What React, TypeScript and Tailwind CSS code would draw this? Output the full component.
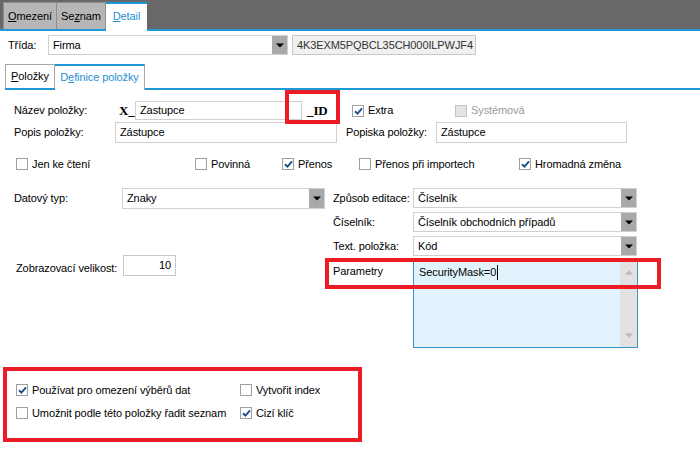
import React from "react";

function Check({ checked, disabled }: { checked?: boolean; disabled?: boolean }) {
  return (
    <span
      className={
        disabled
          ? "flex h-[12px] w-[12px] shrink-0 items-center justify-center border border-[#c4c4c4] bg-[#e4e4e4]"
          : "flex h-[12px] w-[12px] shrink-0 items-center justify-center border border-[#a0a0a0] bg-white"
      }
    >
      {checked && (
        <svg width="9" height="8" viewBox="0 0 9 8">
          <path d="M1 4.2 L3.5 6.6 L8 1.4" fill="none" stroke="#1d4f8e" strokeWidth="1.9" />
        </svg>
      )}
    </span>
  );
}

function CheckItem({
  label,
  checked,
  disabled,
  className,
}: {
  label: string;
  checked?: boolean;
  disabled?: boolean;
  className?: string;
}) {
  return (
    <div className={"flex items-center gap-[4px] " + (className ?? "")}>
      <Check checked={checked} disabled={disabled} />
      <span className={disabled ? "text-[#9a9a9a]" : "text-black"}>{label}</span>
    </div>
  );
}

function Arrow({ color = "#000" }: { color?: string }) {
  return (
    <svg width="8" height="5" viewBox="0 0 8 5">
      <polygon points="0,0.5 8,0.5 4,4.5" fill={color} />
    </svg>
  );
}

function Select({ text, className }: { text: string; className: string }) {
  return (
    <div className={"flex h-full items-stretch border border-[#d0d0d0] bg-white " + className}>
      <div className="flex flex-1 items-center pl-[4px]">{text}</div>
      <div className="flex w-[15px] items-center justify-center bg-[#a9a9a9]">
        <Arrow />
      </div>
    </div>
  );
}

export default function App() {
  return (
    <div className="relative h-[454px] w-[700px] overflow-hidden bg-white font-['Liberation_Sans',Arial,sans-serif] text-[11px] tracking-[-0.1px] text-black">
      {/* top tab bar */}
      <div className="relative flex h-[31px] items-end bg-[#686868] pl-[3px]">
        <div className="absolute bottom-0 left-0 h-[2px] w-full bg-[#1d9ad6]" />
        <div className="relative mb-[2px] flex h-[27px] w-[54px] items-center justify-center border border-b-0 border-[#8c8c8c] bg-[#b6b6b6]">
          <span>
            <span className="underline">O</span>mezení
          </span>
        </div>
        <div className="relative mb-[2px] flex h-[27px] w-[49px] items-center justify-center border border-b-0 border-l-0 border-[#8c8c8c] bg-[#b6b6b6]">
          <span>
            Se<span className="underline">z</span>nam
          </span>
        </div>
        <div className="relative flex h-[29px] w-[41px] items-center justify-center border-t-2 border-[#1d9ad6] bg-white pb-[2px] text-[#2a8fd4]">
          <span>
            <span className="underline">D</span>etail
          </span>
        </div>
      </div>

      {/* Třída row */}
      <div className="mt-[4px] flex h-[20px] items-stretch">
        <div className="flex w-[48px] items-center pl-[8px]">Třída:</div>
        <Select text="Firma" className="w-[240px]" />
        <div className="ml-[4px] flex w-[184px] items-center border border-[#c8c8c8] bg-[#f0f0f0] pl-[4px] text-[#333]">
          4K3EXM5PQBCL35CH000ILPWJF4
        </div>
      </div>

      {/* sub tabs */}
      <div className="relative ml-[5px] mt-[9px] flex h-[26px] items-start">
        <div className="absolute bottom-0 left-0 h-[2px] w-[695px] bg-[#1d9ad6]" />
        <div className="relative flex h-[24px] w-[50px] items-center justify-center border border-b-0 border-[#a8a8a8] bg-white">
          <span>
            <span className="underline">P</span>oložky
          </span>
        </div>
        <div className="relative flex h-[26px] w-[90px] items-center justify-center border-r border-t-2 border-r-[#a8a8a8] border-t-[#1d9ad6] bg-white pb-[2px] text-[#2a8fd4]">
          <span>
            D<span className="underline">e</span>finice položky
          </span>
        </div>
      </div>

      {/* Název položky row */}
      <div className="mt-[11px] flex h-[19px] items-center pl-[14px]">
        <div className="w-[105px]">Název položky:</div>
        <div className="w-[16px] font-['Liberation_Serif',serif] text-[13px] font-bold">X_</div>
        <div className="flex h-full w-[167px] items-center border border-[#d0d0d0] pl-[4px]">Zastupce</div>
        <div className="w-[50px] pl-[5px] font-['Liberation_Serif',serif] text-[13px] font-bold">_ID</div>
        <CheckItem label="Extra" checked className="w-[103px]" />
        <CheckItem label="Systémová" disabled />
      </div>

      {/* Popis row */}
      <div className="mt-[2px] flex h-[21px] items-stretch pl-[14px]">
        <div className="flex w-[101px] items-center">Popis položky:</div>
        <div className="flex w-[222px] items-center border border-[#d0d0d0] pl-[4px]">Zástupce</div>
        <div className="ml-[9px] flex w-[90px] items-center">Popiska položky:</div>
        <div className="flex w-[191px] items-center border border-[#d0d0d0] pl-[4px]">Zástupce</div>
      </div>

      {/* checkbox row */}
      <div className="mt-[15px] flex h-[12px] items-center pl-[16px]">
        <CheckItem label="Jen ke čtení" className="w-[179px]" />
        <CheckItem label="Povinná" className="w-[87px]" />
        <CheckItem label="Přenos" checked className="w-[77px]" />
        <CheckItem label="Přenos při importech" className="w-[160px]" />
        <CheckItem label="Hromadná změna" checked />
      </div>

      {/* two-column section */}
      <div className="mt-[18px] flex pl-[14px]">
        <div className="flex w-[311px] flex-col">
          <div className="flex h-[21px] items-stretch">
            <div className="flex w-[108px] items-center">Datový typ:</div>
            <Select text="Znaky" className="w-[203px]" />
          </div>
          <div className="mt-[46px] flex h-[21px] items-stretch">
            <div className="flex w-[109px] items-center pl-[2px] pt-[6px]">Zobrazovací velikost:</div>
            <div className="flex w-[53px] items-center justify-end border border-[#c8c8c8] pr-[4px]">10</div>
          </div>
        </div>
        <div className="ml-[8px] flex flex-col gap-[4px]">
          <div className="flex h-[20px] items-stretch">
            <div className="flex w-[80px] items-center">Způsob editace:</div>
            <Select text="Číselník" className="w-[224px]" />
          </div>
          <div className="flex h-[20px] items-stretch">
            <div className="flex w-[80px] items-center">Číselník:</div>
            <Select text="Číselník obchodních případů" className="w-[224px]" />
          </div>
          <div className="flex h-[20px] items-stretch">
            <div className="flex w-[80px] items-center">Text. položka:</div>
            <Select text="Kód" className="w-[224px]" />
          </div>
          <div className="flex h-[88px] items-start">
            <div className="flex h-[22px] w-[80px] items-center">Parametry</div>
            <div className="flex h-full w-[225px] border border-[#3a93c6] bg-[#e1f4fd]">
              <div className="flex h-[22px] flex-1 items-center pl-[5px]">
                SecurityMask=0<span className="ml-[1px] inline-block h-[15px] w-[1px] bg-black" />
              </div>
              <div className="flex w-[17px] flex-col items-center justify-between bg-[#e2e2e2] py-[9px]">
                <svg width="8" height="5" viewBox="0 0 8 5">
                  <polygon points="0,4.5 8,4.5 4,0.5" fill="#b8b8b8" />
                </svg>
                <Arrow color="#b8b8b8" />
              </div>
            </div>
          </div>
        </div>
      </div>

      {/* bottom group */}
      <div className="ml-[3px] mt-[19px] flex h-[75px] w-[359px] flex-col gap-[11px] border-4 border-[#ec1c24] pl-[9px] pt-[13px]">
        <div className="flex h-[12px] items-center">
          <CheckItem label="Používat pro omezení výběrů dat" checked className="w-[224px]" />
          <CheckItem label="Vytvořit index" />
        </div>
        <div className="flex h-[12px] items-center">
          <CheckItem label="Umožnit podle této položky řadit seznam" className="w-[224px]" />
          <CheckItem label="Cizí klíč" checked />
        </div>
      </div>

      {/* annotation boxes */}
      <div className="absolute left-[285px] top-[90px] h-[34px] w-[55px] border-4 border-[#ec1c24]" />
      <div className="absolute left-[325px] top-[258px] h-[31px] w-[336px] border-4 border-[#ec1c24]" />
    </div>
  );
}
